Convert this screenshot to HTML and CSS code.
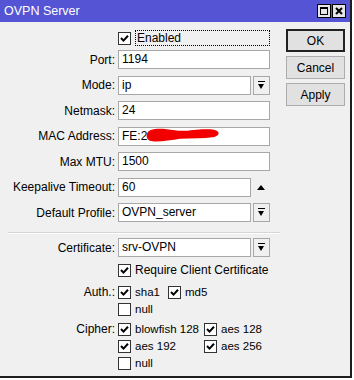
FILE: index.html
```html
<!DOCTYPE html>
<html lang="en">
<head>
    <meta charset="UTF-8">
    <title>OVPN Server</title>
    <link rel="stylesheet" href="styles.css">
</head>
<body>
    <div class="window">
        <div class="titlebar">
            <span class="title">OVPN Server</span>
            <div class="title-buttons">
                <span class="tb-btn">
                    <svg width="12" height="12" viewBox="0 0 12 12"><rect x="2.5" y="2.5" width="7" height="7" fill="none" stroke="#000"/><rect x="2" y="2" width="8" height="2" fill="#000"/></svg>
                </span>
                <span class="tb-btn">
                    <svg width="12" height="12" viewBox="0 0 12 12"><path d="M3 3 L9 9 M9 3 L3 9" stroke="#000" stroke-width="2"/></svg>
                </span>
            </div>
        </div>

        <div class="content">
            <div class="form">
                <div class="row enabled-row">
                    <span></span>
                    <div class="check">
                        <span class="box on"></span>
                        <span class="focus">Enabled</span>
                    </div>
                </div>

                <div class="fields">
                    <div class="row"><span class="label">Port:</span><div class="field">1194</div></div>
                    <div class="row"><span class="label">Mode:</span><div class="combo"><div class="field">ip</div><span class="drop"></span></div></div>
                    <div class="row"><span class="label">Netmask:</span><div class="field">24</div></div>
                    <div class="row"><span class="label">MAC Address:</span>
                        <div class="field masked">FE:2
                            <svg class="scribble" width="76" height="16" viewBox="0 0 80 16"><path d="M1 7 C2 1, 14 0, 30 3 C44 5, 52 1, 68 2 C78 3, 79 8, 72 10 C60 12, 48 11, 36 12 C24 14, 10 16, 4 14 C1 13, 0 10, 1 7 Z" fill="#f20000"/></svg>
                        </div>
                    </div>
                    <div class="row"><span class="label">Max MTU:</span><div class="field">1500</div></div>
                    <div class="row"><span class="label">Keepalive Timeout:</span><div class="combo"><div class="field">60</div><span class="up"></span></div></div>
                    <div class="row"><span class="label">Default Profile:</span><div class="combo"><div class="field">OVPN_server</div><span class="drop"></span></div></div>
                </div>

                <div class="sep"></div>

                <div class="row cert-row"><span class="label">Certificate:</span><div class="combo"><div class="field">srv-OVPN</div><span class="drop"></span></div></div>

                <div class="row require-row">
                    <span></span>
                    <div class="check"><span class="box on"></span><span>Require Client Certificate</span></div>
                </div>

                <div class="row group auth">
                    <span class="label">Auth.:</span>
                    <div class="checks">
                        <div class="check"><span class="box on"></span><span>sha1</span></div>
                        <div class="check"><span class="box on"></span><span>md5</span></div>
                        <div class="check"><span class="box"></span><span>null</span></div>
                    </div>
                </div>

                <div class="row group cipher">
                    <span class="label">Cipher:</span>
                    <div class="checks">
                        <div class="check"><span class="box on"></span><span>blowfish 128</span></div>
                        <div class="check"><span class="box on"></span><span>aes 128</span></div>
                        <div class="check"><span class="box on"></span><span>aes 192</span></div>
                        <div class="check"><span class="box on"></span><span>aes 256</span></div>
                        <div class="check"><span class="box"></span><span>null</span></div>
                    </div>
                </div>
            </div>

            <div class="actions">
                <button class="btn default">OK</button>
                <button class="btn">Cancel</button>
                <button class="btn">Apply</button>
            </div>
        </div>
    </div>
</body>
</html>
```

FILE: styles.css
```css
html {
    background: #fff;
}
body {
    margin: 0;
    font-family: "Liberation Sans", Arial, sans-serif;
    font-size: 12px;
    color: #000;
}
.window {
    width: 350px;
    height: 376px;
    background: #f0f0f0;
    border-right: 2px solid #1e1e1e;
    border-bottom: 2px solid #1e1e1e;
}
.titlebar {
    height: 22px;
    background: #5454d4;
    color: #fff;
    display: flex;
    align-items: center;
    justify-content: space-between;
    padding: 0 4px;
    font-size: 12.5px;
}
.title-buttons {
    display: flex;
    gap: 1px;
}
.tb-btn {
    width: 14px;
    height: 14px;
    box-sizing: border-box;
    border: 1px solid #000;
    background: #e6e6e6;
    display: flex;
    align-items: center;
    justify-content: center;
}
.content {
    display: flex;
}
.form {
    width: 286px;
    padding-top: 8px;
}
.row {
    display: grid;
    grid-template-columns: 115px 152px;
    column-gap: 3px;
    align-items: center;
}
.label {
    text-align: right;
    white-space: nowrap;
}
.enabled-row {
    height: 16px;
    margin-bottom: 4px;
}
.fields {
    display: flex;
    flex-direction: column;
    gap: 6.5px;
}
.field {
    height: 19px;
    box-sizing: border-box;
    border: 1px solid #a8a8a8;
    background: #fff;
    padding-left: 3px;
    line-height: 17px;
    white-space: nowrap;
}
.masked {
    position: relative;
}
.scribble {
    position: absolute;
    left: 27px;
    top: -1px;
}
.combo {
    display: flex;
    gap: 2px;
}
.combo .field {
    flex: 1;
}
.drop, .up {
    width: 17px;
    height: 19px;
    box-sizing: border-box;
    position: relative;
}
.drop {
    border: 1px solid #a8a8a8;
    background: #f0f0f0;
}
.drop::before {
    content: "";
    position: absolute;
    left: 4px;
    top: 4px;
    width: 7px;
    height: 1px;
    background: #000;
}
.drop::after {
    content: "";
    position: absolute;
    left: 4px;
    top: 7px;
    border-left: 3.5px solid transparent;
    border-right: 3.5px solid transparent;
    border-top: 5px solid #000;
}
.up::after {
    content: "";
    position: absolute;
    left: 4px;
    top: 7px;
    border-left: 4.5px solid transparent;
    border-right: 4.5px solid transparent;
    border-bottom: 5px solid #000;
}
.sep {
    width: 272px;
    margin: 10px 0 4px 8px;
    border-top: 1px solid #d6d6d6;
    border-bottom: 1px solid #fff;
}
.check {
    display: flex;
    align-items: center;
    gap: 4px;
    height: 16px;
    white-space: nowrap;
}
.box {
    width: 13px;
    height: 13px;
    box-sizing: border-box;
    border: 1px solid #333;
    background: #fff;
    flex: none;
}
.box.on {
    background: #fff url("data:image/svg+xml;utf8,<svg xmlns='http://www.w3.org/2000/svg' width='11' height='11'><path d='M2 5 L4.5 7.6 L9 2.8' fill='none' stroke='black' stroke-width='2'/></svg>") no-repeat center;
}
.focus {
    flex: 1;
    height: 16px;
    box-sizing: border-box;
    border: 1px dotted #000;
    line-height: 14px;
    padding-left: 1px;
}
.require-row {
    margin-top: 5px;
}
.group {
    align-items: start;
}
.group .label {
    line-height: 16px;
}
.checks {
    display: grid;
    row-gap: 1px;
    font-size: 11.5px;
}
.auth {
    margin-top: 6px;
}
.auth .checks {
    grid-template-columns: 50px auto;
}
.cipher {
    margin-top: 4px;
}
.cipher .checks {
    grid-template-columns: 86px auto;
}
.actions {
    display: flex;
    flex-direction: column;
    gap: 4px;
    padding-top: 7px;
    width: 59px;
}
.btn {
    height: 23px;
    box-sizing: border-box;
    border: 1px solid #adadad;
    background: #e1e1e1;
    font-family: inherit;
    font-size: 12px;
    color: #000;
    padding: 0;
}
.btn.default {
    border: 2px solid #222;
}
```
